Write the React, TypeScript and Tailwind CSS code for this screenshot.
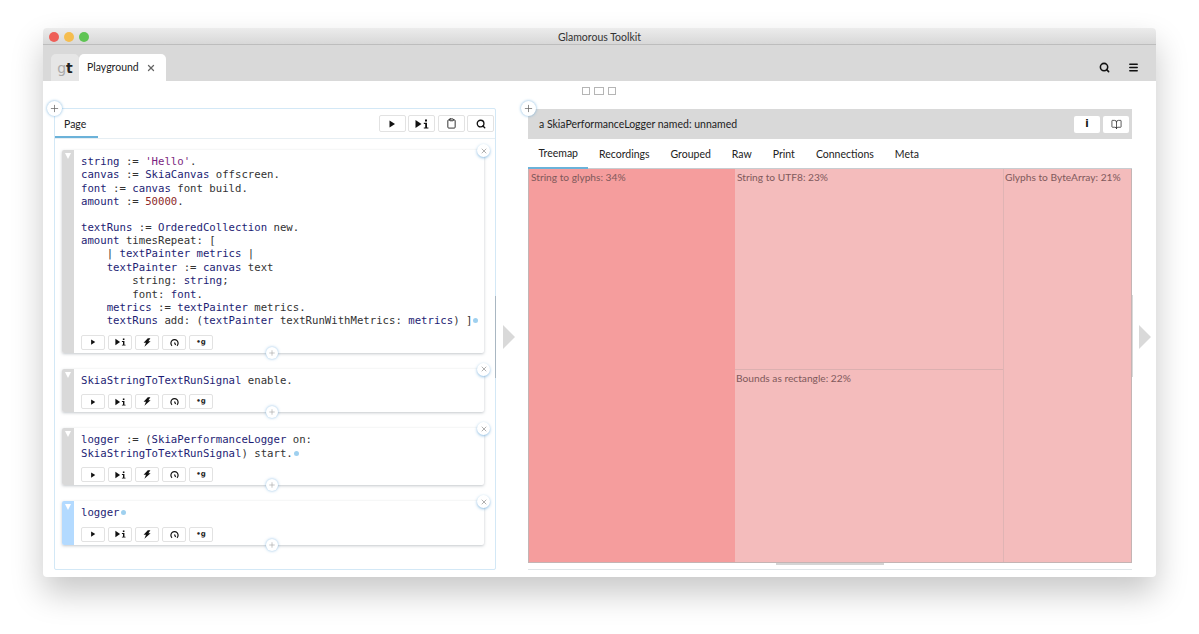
import { BookOpen, Clipboard, Menu, Plus, Search, X } from "lucide-react";
import type { ReactNode } from "react";

const uiFont = "font-['Lato','Liberation_Sans',sans-serif]";

function V({ children }: { children: ReactNode }) {
  return <span className="text-[#1d1d74]">{children}</span>;
}

function Dot() {
  return <span className="inline-block w-[5px] h-[5px] rounded-full bg-[#9fd0ef] ml-[1px] align-[1px]" />;
}

function PlayIcon({ size = 8 }: { size?: number }) {
  return (
    <svg width={size} height={size} viewBox="0 0 8 8">
      <path d="M1.5 0.5 L7 4 L1.5 7.5 Z" fill="#111" />
    </svg>
  );
}

function PlayInspect({ big = false }: { big?: boolean }) {
  return (
    <svg width={big ? 14 : 11} height={big ? 10 : 8} viewBox="0 0 14 10">
      <path d="M0.5 1 L6.5 5 L0.5 9 Z" fill="#111" />
      <rect x="10" y="0.5" width="2" height="2" fill="#111" />
      <path d="M8.8 3.8 H12 V8.4 H13.4 V9.6 H8.8 V8.4 H10.2 V5 H8.8 Z" fill="#111" />
    </svg>
  );
}

function Bolt() {
  return (
    <svg width="8" height="9" viewBox="0 0 8 9">
      <path d="M4.8 0.2 L7.4 0.2 L5.4 3.2 L7.6 3.2 L1.4 8.8 L3 4.8 L0.6 4.8 Z" fill="#111" />
    </svg>
  );
}

function Gauge() {
  return (
    <svg width="9" height="9" viewBox="0 0 9 9" fill="none">
      <path d="M2 7.8 A3.6 3.6 0 1 1 7 7.8" stroke="#111" strokeWidth="1.2" />
      <path d="M4.5 4.6 L5.6 7" stroke="#111" strokeWidth="1.2" />
    </svg>
  );
}

function SnippetButton({ children }: { children: ReactNode }) {
  return (
    <div className="w-[24px] h-[15px] bg-white border border-[#e2e2e2] rounded-[2px] flex items-center justify-center">
      {children}
    </div>
  );
}

function Snippet({ children, active = false }: { children: ReactNode; active?: boolean }) {
  return (
    <div className="relative flex bg-white rounded-[2px] shadow-[0_1px_3px_rgba(120,130,140,0.45)]">
      <div className={`w-[12px] shrink-0 rounded-l-[2px] pt-[3px] pl-[3px] ${active ? "bg-[#b3daff]" : "bg-[#d9d9d9]"}`}>
        <div className="w-0 h-0 border-x-[3px] border-x-transparent border-t-[6px] border-t-white" />
      </div>
      <div className="flex-1 pl-[7px] pt-[5px] pb-[3px]">
        <div className="font-['DejaVu_Sans_Mono',monospace] text-[10.67px] leading-[13.4px] text-[#333] whitespace-pre">
          {children}
        </div>
        <div className="flex gap-[3px] mt-[7px]">
          <SnippetButton><PlayIcon size={6} /></SnippetButton>
          <SnippetButton><PlayInspect /></SnippetButton>
          <SnippetButton><Bolt /></SnippetButton>
          <SnippetButton><Gauge /></SnippetButton>
          <SnippetButton>
            <span className="font-['DejaVu_Sans',sans-serif] text-[7px] font-bold leading-none text-[#222]">•g</span>
          </SnippetButton>
        </div>
      </div>
      <div className="absolute -right-[6px] -top-[6px] w-[13px] h-[13px] rounded-full bg-white shadow-[0_1px_3px_rgba(90,160,215,0.7)] flex items-center justify-center">
        <X size={8} color="#888" strokeWidth={2} />
      </div>
      <div className="absolute left-[204px] -bottom-[6px] w-[12px] h-[12px] rounded-full bg-white shadow-[0_0_3px_rgba(90,160,215,0.7)] flex items-center justify-center">
        <Plus size={8} color="#aaa" strokeWidth={2} />
      </div>
    </div>
  );
}

function ToolButton({ children }: { children: ReactNode }) {
  return (
    <div className="w-[27px] h-[17px] bg-white border border-[#e2e2e2] rounded-[2px] flex items-center justify-center">
      {children}
    </div>
  );
}

function AddButton({ className }: { className: string }) {
  return (
    <div className={`absolute w-[15px] h-[15px] rounded-full bg-white shadow-[0_0_3px_rgba(90,160,215,0.8)] flex items-center justify-center ${className}`}>
      <Plus size={11} color="#666" strokeWidth={1.6} />
    </div>
  );
}

function Arrow() {
  return <div className="w-0 h-0 border-y-[12.5px] border-y-transparent border-l-[12px] border-l-[#d9d9d9]" />;
}

function TreeCell({ label, className }: { label: string; className: string }) {
  return <div className={`text-[10.2px] leading-[16px] text-[#80595b] whitespace-nowrap ${className}`}>{label}</div>;
}

const tabs = ["Treemap", "Recordings", "Grouped", "Raw", "Print", "Connections", "Meta"];

export default function App() {
  return (
    <div className={`w-[1199px] h-[634px] bg-white pt-[28px] pl-[43px] overflow-hidden ${uiFont}`}>
      <div className="w-[1113px] h-[549px] flex flex-col bg-white rounded-[4px] shadow-[0_16px_32px_rgba(0,0,0,0.22)]">
        {/* title bar */}
        <div className="relative h-[17px] shrink-0 rounded-t-[4px] bg-gradient-to-b from-[#ececec] to-[#d8d8d8] border-b border-[#bdbdbd] flex items-center justify-center pt-[3px]">
          <div className="absolute left-[6px] top-[4px] flex gap-[5px]">
            <div className="w-[10px] h-[10px] rounded-full bg-[#ee5f58]" />
            <div className="w-[10px] h-[10px] rounded-full bg-[#f5bd4f]" />
            <div className="w-[10px] h-[10px] rounded-full bg-[#5fc454]" />
          </div>
          <span className="text-[10.5px] leading-none text-[#333]">Glamorous Toolkit</span>
        </div>

        {/* tab bar */}
        <div className="h-[36px] shrink-0 bg-[#d9d9d9] flex items-end pl-[8px] pr-[17px]">
          <div className="w-[28px] h-[27px] bg-[#e6e6e6] rounded-t-[5px] flex items-center justify-center text-[14px] leading-none font-['DejaVu_Sans',sans-serif]">
            <span className="text-[#aaa]">g</span>
            <span className="font-bold text-[#222]">t</span>
          </div>
          <div className="w-[87px] h-[27px] bg-white rounded-t-[5px] flex items-center pl-[8px] text-[10.5px] text-[#222]">
            Playground
            <X size={10} color="#666" strokeWidth={3} className="ml-[7px]" />
          </div>
          <div className="ml-auto h-[27px] flex items-center gap-[18px]">
            <Search size={11} color="#111" strokeWidth={3.4} />
            <Menu size={11} color="#111" strokeWidth={3.4} />
          </div>
        </div>

        {/* content */}
        <div className="flex-1 pt-[6px]">
          <div className="flex justify-center gap-[4px] h-[8px] pr-[2px]">
            <div className="w-[8px] h-[8px] border border-[#b5b5b5]" />
            <div className="w-[10px] h-[8px] border border-[#b5b5b5]" />
            <div className="w-[8px] h-[8px] border border-[#b5b5b5]" />
          </div>

          <div className="flex mt-[13px] pl-[11px] h-[462px]">
            {/* left pane */}
            <div className="relative w-[442px] shrink-0 border border-[#d3e8f6] rounded-[2px] bg-white">
              <AddButton className="-left-[8px] -top-[8px]" />
              <div className="h-[30px] border-b border-[#e6eef3] flex items-start justify-between pr-[1px]">
                <div className="h-[29px] w-[43px] border-b-2 border-[#6bb2d9] pl-[9px] pt-[8px] text-[10.5px] leading-[15px] text-[#222]">
                  Page
                </div>
                <div className="flex gap-[2.5px] mt-[6px]">
                  <ToolButton><PlayIcon /></ToolButton>
                  <ToolButton><PlayInspect big /></ToolButton>
                  <ToolButton><Clipboard size={11} color="#222" strokeWidth={2} /></ToolButton>
                  <ToolButton><Search size={10} color="#111" strokeWidth={3.2} /></ToolButton>
                </div>
              </div>
              <div className="flex flex-col gap-[16px] pt-[11px] pl-[7px] pr-[11px]">
                <Snippet>
                  <div>
                    <V>string</V> := <span className="text-[#7b1f80]">'Hello'</span>.{"\n"}
                    <V>canvas</V> := <V>SkiaCanvas</V> offscreen.{"\n"}
                    <V>font</V> := <V>canvas</V> font build.{"\n"}
                    <V>amount</V> := <span className="text-[#8e2a2a]">50000</span>.
                  </div>
                  <div className="mt-[12px]">
                    <V>textRuns</V> := <V>OrderedCollection</V> new.{"\n"}
                    <V>amount</V> timesRepeat: [{"\n"}
                    {"    "}| <V>textPainter</V> <V>metrics</V> |{"\n"}
                    {"    "}<V>textPainter</V> := <V>canvas</V> text{"\n"}
                    {"        "}string: <V>string</V>;{"\n"}
                    {"        "}font: <V>font</V>.{"\n"}
                    {"    "}<V>metrics</V> := <V>textPainter</V> metrics.{"\n"}
                    {"    "}<V>textRuns</V> add: (<V>textPainter</V> textRunWithMetrics: <V>metrics</V>) ]<Dot />
                  </div>
                </Snippet>
                <Snippet>
                  <V>SkiaStringToTextRunSignal</V> enable.
                </Snippet>
                <Snippet>
                  <V>logger</V> := (<V>SkiaPerformanceLogger</V> on:{"\n"}
                  <V>SkiaStringToTextRunSignal</V>) start.<Dot />
                </Snippet>
                <Snippet active>
                  <V>logger</V><Dot />
                </Snippet>
              </div>
              <div className="absolute -right-[1px] top-[187px] w-[1px] h-[82px] bg-[#a9b7c2]" />
            </div>

            <div className="w-[32px] shrink-0 flex items-center pb-[4px] pl-[7px]">
              <Arrow />
            </div>

            {/* right pane */}
            <div className="relative w-[604px] shrink-0 flex flex-col bg-white border-b border-[#dfe5e8]">
              <AddButton className="-left-[7px] -top-[7px]" />
              <div className="h-[30px] mt-[1px] shrink-0 bg-[#d9d9d9] flex items-center justify-between pl-[11px] pr-[3px] text-[10.5px] text-[#222]">
                <span className="pt-[1px]">a SkiaPerformanceLogger named: unnamed</span>
                <div className="flex gap-[3px]">
                  <div className="w-[26px] h-[17px] bg-white rounded-[2px] flex items-center justify-center">
                    <span className="font-['DejaVu_Sans',sans-serif] text-[10px] font-bold leading-none text-[#111]">i</span>
                  </div>
                  <div className="w-[26px] h-[17px] bg-white rounded-[2px] flex items-center justify-center">
                    <BookOpen size={11} color="#222" strokeWidth={1.6} />
                  </div>
                </div>
              </div>
              <div className="h-[30px] shrink-0 flex border-b border-[#c8ccd0]">
                {tabs.map((tab, i) => (
                  <div
                    key={tab}
                    className={`h-[30px] px-[10.5px] pt-[2px] flex items-center text-[10.5px] text-[#222] ${i === 0 ? "border-b-2 border-[#6bb2d9]" : ""}`}
                  >
                    {tab}
                  </div>
                ))}
              </div>
              <div className="h-[394px] shrink-0 flex border border-[#c4b4b4] border-t-0">
                <TreeCell label="String to glyphs: 34%" className="w-[206px] pl-[2px] bg-[#f59d9d]" />
                <div className="w-[268px] flex flex-col">
                  <TreeCell label="String to UTF8: 23%" className="h-[201px] pl-[2px] bg-[#f4bcbc] border-b border-[#dcb0b0]" />
                  <TreeCell label="Bounds as rectangle: 22%" className="flex-1 pl-[1px] bg-[#f4bcbc]" />
                </div>
                <TreeCell label="Glyphs to ByteArray: 21%" className="flex-1 pl-[1px] bg-[#f4bcbc] border-l border-[#e0b4b4]" />
              </div>
              <div className="h-[3px] pl-[248px]">
                <div className="w-[108px] h-[2px] bg-[#d4d4d4]" />
              </div>
              <div className="absolute -right-[1px] top-[187px] w-[1px] h-[82px] bg-[#d9d9d9]" />
            </div>

            <div className="flex-1 flex items-center justify-center pb-[4px] pl-[1px]">
              <Arrow />
            </div>
          </div>
        </div>
      </div>
    </div>
  );
}
